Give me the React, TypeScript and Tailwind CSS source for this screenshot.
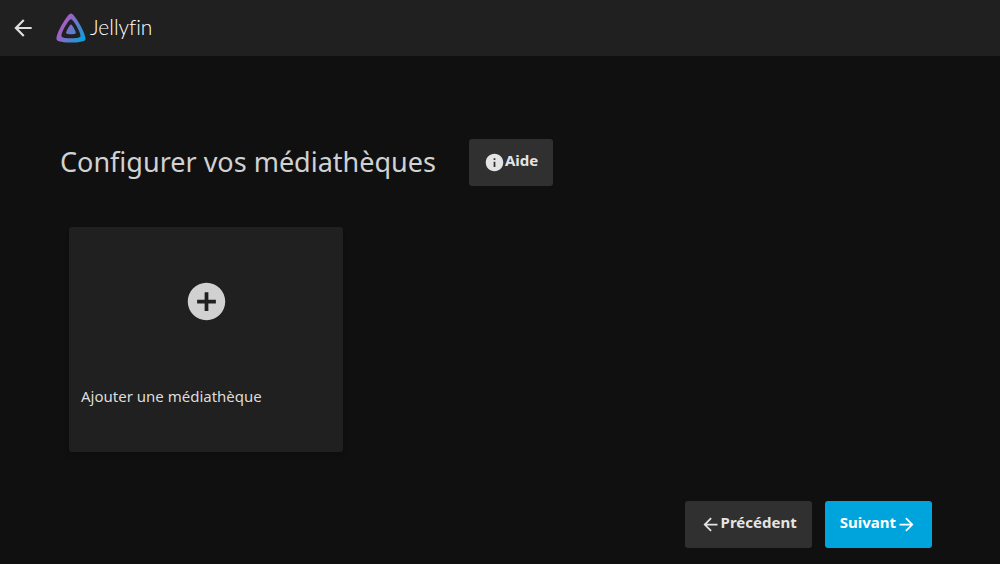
import type { ReactNode } from "react";
import { MdAddCircle, MdArrowBack, MdArrowForward, MdInfo } from "react-icons/md";

function Logo() {
  return (
    <a href="#" className="flex items-center gap-[3px] text-white">
      <svg viewBox="0 0 512 512" className="size-8" aria-hidden="true">
        <defs>
          <linearGradient
            id="logo-gradient"
            gradientUnits="userSpaceOnUse"
            x1="110"
            y1="213"
            x2="496"
            y2="436"
          >
            <stop offset="0" stopColor="#aa5cc3" />
            <stop offset="1" stopColor="#00a4dc" />
          </linearGradient>
        </defs>
        <path
          fill="url(#logo-gradient)"
          d="M256 201.600c-20.400 0-86.200 119.300-76.200 139.400s142.500 19.900 152.400 0-55.700-139.400-76.200-139.400z"
        />
        <path
          fill="url(#logo-gradient)"
          fillRule="evenodd"
          d="M256 23.300C194.400 23.300-3.800 382.700 26.400 443.300s429.300 60 459.200 0S317.700 23.300 256 23.300zm150.500 367.500c-19.600 39.300-281.100 39.800-300.900 0S215.700 115.500 256 115.500s170.100 236 150.500 275.300z"
        />
      </svg>
      <span className="pb-0.5 font-[Lato,sans-serif] text-[21px] leading-6 font-light [font-variant-ligatures:none]">
        Jellyfin
      </span>
    </a>
  );
}

function Header() {
  return (
    <header className="flex h-14 items-center gap-[19px] bg-[#202020] px-[10px]">
      <button type="button" aria-label="Retour" className="text-[#dedede]">
        <MdArrowBack className="size-[26px]" />
      </button>
      <Logo />
    </header>
  );
}

interface ActionButtonProps {
  children: ReactNode;
  primary?: boolean;
}

function ActionButton({ children, primary }: ActionButtonProps) {
  return (
    <button
      type="button"
      className={
        "flex items-center rounded-[3px] px-[15px] py-[13px] text-[15px] leading-4 font-bold " +
        (primary ? "bg-[#00a4dc] text-white" : "bg-[#303030] text-[#e4e4e4]")
      }
    >
      {children}
    </button>
  );
}

export default function App() {
  return (
    <div className="min-h-screen bg-[#101010] font-['Noto_Sans',sans-serif] text-[#d1d1d1]">
      <Header />
      <main className="px-[60px] pt-[83px] pb-4">
        <div className="flex items-center gap-[33px]">
          <h1 className="pb-0.5 text-[27px] leading-9">Configurer vos médiathèques</h1>
          <ActionButton>
            <MdInfo className="size-[21px]" />
            <span className="pb-[5px]">Aide</span>
          </ActionButton>
        </div>

        <div className="mt-[41px] px-[9px]">
          <button
            type="button"
            className="flex w-[274px] flex-col rounded-[3px] bg-[#202020] text-left shadow-md"
          >
            <span className="flex w-full justify-center pt-[52px] pb-[62px]">
              <MdAddCircle className="size-[45px]" />
            </span>
            <span className="px-3 pb-[46px] text-[15px] leading-5 text-[#dcdcdc]">
              Ajouter une médiathèque
            </span>
          </button>
        </div>

        <div className="mt-[49px] flex justify-end gap-[13px] pr-2">
          <ActionButton>
            <MdArrowBack className="size-[21px]" />
            <span className="pb-[5px]">Précédent</span>
          </ActionButton>
          <ActionButton primary>
            <span className="pb-[5px]">Suivant</span>
            <MdArrowForward className="size-[21px]" />
          </ActionButton>
        </div>
      </main>
    </div>
  );
}
